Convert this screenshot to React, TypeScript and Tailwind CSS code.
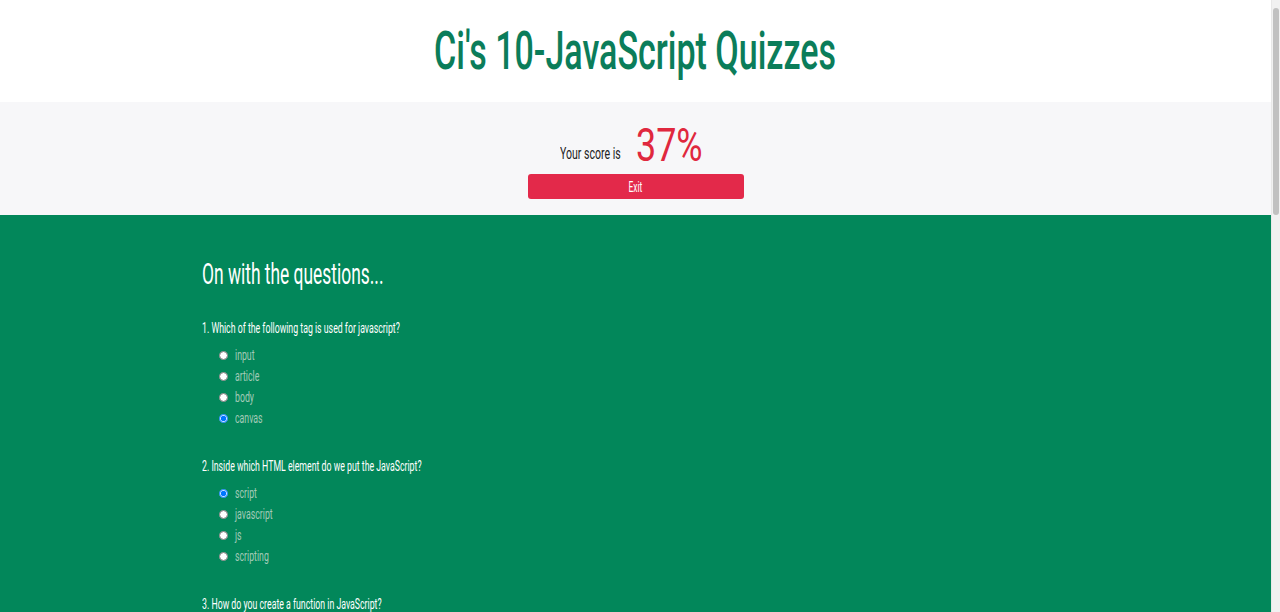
const font = { fontFamily: 'Roboto, "Liberation Sans", sans-serif' } as const

type Question = {
  q: string
  options: string[]
  picked?: number
}

const questions: Question[] = [
  {
    q: '1. Which of the following tag is used for javascript?',
    options: ['input', 'article', 'body', 'canvas'],
    picked: 3,
  },
  {
    q: '2. Inside which HTML element do we put the JavaScript?',
    options: ['script', 'javascript', 'js', 'scripting'],
    picked: 0,
  },
  {
    q: '3. How do you create a function in JavaScript?',
    options: ['function myFunction()', 'function = myFunction()', 'function:myFunction()', 'create myFunction()'],
  },
]

// the original uses a condensed display face, so squeeze Roboto sideways
const squeeze = 'inline-block origin-left scale-x-[0.625] whitespace-nowrap'

export default function App() {
  return (
    <div className="flex h-screen overflow-hidden" style={font}>
      <div className="min-w-0 flex-1">
        <header className="flex h-[102px] items-center justify-center bg-white">
          <h1 className="origin-center scale-x-[0.63] text-[54px] font-medium leading-none text-[#0b7d5a]">
            Ci's 10-JavaScript Quizzes
          </h1>
        </header>

        <section className="flex h-[113px] flex-col items-center bg-[#f7f7f9] pt-[20px]">
          <div className="mr-[12px] flex items-end gap-[15px]">
            <span className="mb-[2px] w-[61px] whitespace-nowrap">
              <span className="inline-block origin-left scale-x-[0.62] text-[17px] leading-none text-[#222]">
                Your score is
              </span>
            </span>
            <span className="w-[64px] whitespace-nowrap">
              <span className="inline-block origin-left scale-x-[0.78] text-[46px] leading-none text-[#e0283e]">
                37%
              </span>
            </span>
          </div>
          <button className="mt-[6px] h-[25px] w-[216px] rounded-[3px] bg-[#e3294a] text-white">
            <span className="inline-block scale-x-[0.6] text-[14px]">Exit</span>
          </button>
        </section>

        <section className="bg-[#02875a] px-[202px] pb-16 pt-[45px]">
          <h2 className="inline-block origin-left scale-x-[0.6] whitespace-nowrap text-[29px] leading-none text-white">
            On with the questions...
          </h2>
          <div className="mt-[25px] flex flex-col gap-[25px]">
            {questions.map((item, qi) => (
              <div key={qi}>
                <p className={`${squeeze} text-[14px] leading-none text-white`}>{item.q}</p>
                <ul className="mt-[5px] flex flex-col">
                  {item.options.map((opt, oi) => (
                    <li key={opt} className="flex h-[21px] items-center gap-[7px] pl-[17px]">
                      <input
                        type="radio"
                        name={`q${qi}`}
                        defaultChecked={item.picked === oi}
                        className="m-0 h-[9px] w-[9px]"
                      />
                      <span className={`${squeeze} text-[14px] text-[#a3cbb8]`}>{opt}</span>
                    </li>
                  ))}
                </ul>
              </div>
            ))}
          </div>
        </section>
      </div>

      {/* fake scrollbar, headless hides the real one */}
      <div className="flex w-[9px] flex-col border-l border-[#e8e8e8] bg-[#f1f1f1]">
        <div className="h-[8px]" />
        <div className="mx-[1px] h-[207px] rounded-sm bg-[#c1c1c1]" />
      </div>
    </div>
  )
}
